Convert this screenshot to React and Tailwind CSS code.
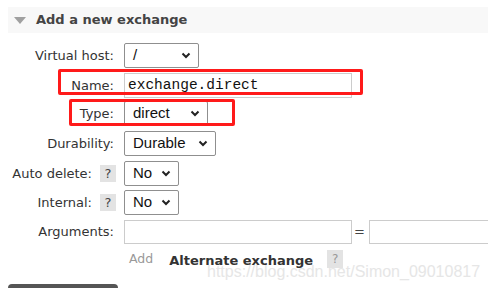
import React from "react";

const Chevron = () => (
  <svg width="10" height="7" viewBox="0 0 10 7" className="shrink-0">
    <path d="M1.5 1.5 L5 5 L8.5 1.5" fill="none" stroke="#222" strokeWidth="2" />
  </svg>
);

const FakeSelect = ({ value, width }) => (
  <div
    className="h-[25px] shrink-0 border border-[#8f8f8f] rounded-[2px] bg-white flex items-center justify-between pl-[8px] pr-[7px] text-[15px] text-[#111] font-['Liberation_Sans',sans-serif]"
    style={{ width }}
  >
    <span>{value}</span>
    <Chevron />
  </div>
);

const Help = () => (
  <span className="inline-flex items-center justify-center w-[16px] h-[17px] bg-[#e3e3e3] text-[#444] text-[13px]">
    ?
  </span>
);

const Row = ({ label, help, children, className = "" }) => (
  <div className={"flex items-center " + className}>
    <div
      className={
        "w-[124px] shrink-0 flex items-center justify-end " +
        (help ? "pr-[8px]" : "pr-[10px]")
      }
    >
      <span className={help ? "mr-[8px]" : ""}>{label}</span>
      {help && <Help />}
    </div>
    {children}
  </div>
);

export default function App() {
  return (
    <div className="relative w-[488px] h-[288px] bg-white overflow-hidden font-['DejaVu_Sans',Verdana,sans-serif] text-[13px] text-[#333]">
      <div className="pt-[7px] pl-[8px]">
        <div className="h-[26px] bg-[#f8f8f8] flex items-center pl-[6px]">
          <svg width="12" height="7" viewBox="0 0 12 7" className="mr-[10px]">
            <path d="M0 0 L12 0 L6 7 Z" fill="#a0a0a0" />
          </svg>
          <span className="font-bold text-[13px] text-[#444]">Add a new exchange</span>
        </div>
      </div>

      <div className="mt-[10px] flex flex-col">
        <Row label="Virtual host:">
          <FakeSelect value="/" width={75} />
        </Row>
        <Row label="Name:" className="mt-[5px]">
          <div className="w-[228px] h-[25px] shrink-0 border border-[#cccccc] flex items-center pl-[3px] font-['Liberation_Mono',monospace] text-[14.5px] text-[#111]">
            exchange.direct
          </div>
        </Row>
        <Row label="Type:" className="mt-[3px]">
          <FakeSelect value="direct" width={84} />
        </Row>
        <Row label="Durability:" className="mt-[5px]">
          <FakeSelect value="Durable" width={92} />
        </Row>
        <Row label="Auto delete:" help className="mt-[5px]">
          <FakeSelect value="No" width={55} />
        </Row>
        <Row label="Internal:" help className="mt-[4px]">
          <FakeSelect value="No" width={55} />
        </Row>
        <Row label="Arguments:" className="mt-[5px]">
          <div className="w-[228px] h-[24px] shrink-0 border border-[#cccccc]" />
          <span className="ml-[2px] mr-[4px] text-[13px] text-[#444]">=</span>
          <div className="w-[130px] h-[24px] border border-[#cccccc] shrink-0" />
        </Row>
        <div className="flex items-center mt-[4px] pl-[129px]">
          <span className="text-[#999] text-[12.5px]">Add</span>
          <span className="ml-[16px] font-bold text-[13px] text-[#333] mt-[3px]">Alternate exchange</span>
          <span className="ml-[14px] inline-flex items-center justify-center w-[16px] h-[18px] bg-[#e3e3e3] text-[#999] text-[12px]">?</span>
        </div>
      </div>

      <div className="absolute left-[8px] top-[284px] w-[110px] h-[10px] bg-[#555] rounded-t-[4px]" />

      <div className="absolute left-[207px] top-[260px] text-[16px] text-[#e6e6e6] font-['Liberation_Sans',sans-serif] pointer-events-none whitespace-nowrap">
        https://blog.csdn.net/Simon_09010817
      </div>

      <div className="absolute left-[58px] top-[69px] w-[305px] h-[26px] border-[3px] border-[#ff1a1a] rounded-[2px]" />
      <div className="absolute left-[69px] top-[99px] w-[166px] h-[27px] border-[3px] border-[#ff1a1a] rounded-[2px]" />
    </div>
  );
}
